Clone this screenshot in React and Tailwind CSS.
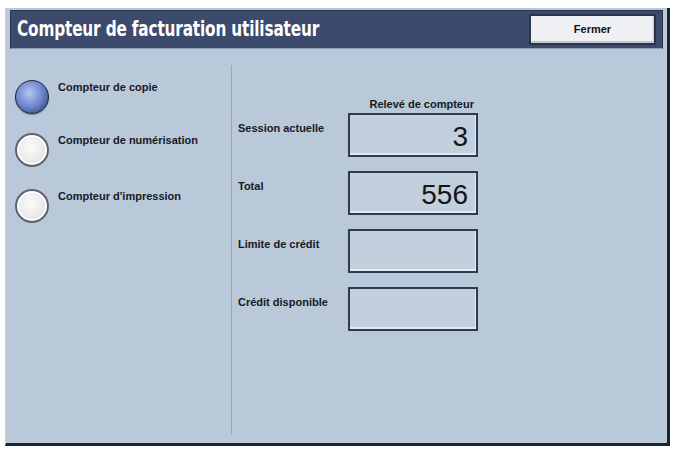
import React from 'react';

const counters = [
    { label: 'Compteur de copie', selected: true, mt: 'mt-[17px]' },
    { label: 'Compteur de numérisation', selected: false, mt: 'mt-[19px]' },
    { label: "Compteur d'impression", selected: false, mt: 'mt-[22px]' },
];

const readings = [
    { label: 'Session actuelle', value: '3' },
    { label: 'Total', value: '556' },
    { label: 'Limite de crédit', value: '' },
    { label: 'Crédit disponible', value: '' },
];

const Radio = ({ selected }) =>
    selected ? (
        <div className="h-[34px] w-[34px] shrink-0 rounded-full border border-[#1c2440] bg-radial-[at_42%_38%] from-[#b4c6f4] via-[#6d85cc] to-[#26335e] shadow-[0_1px_1px_rgba(0,0,0,0.35)]" />
    ) : (
        <div className="h-[34px] w-[34px] shrink-0 rounded-full border-2 border-[#5e636e] bg-radial-[at_45%_40%] from-[#fbfbfb] via-[#ececec] to-[#cfd1d6] shadow-[inset_0_0_0_2px_#ffffff]" />
    );

const App = () => {
    return (
        <div className="h-[449px] w-[673px] bg-white pl-[5px] pt-[8px] font-['Liberation_Sans',Arial,sans-serif] text-[#161a24]">
            <div className="flex h-[438px] w-[665px] flex-col border-l border-r-[3px] border-b-[3px] border-l-[#c9ced8] border-r-[#1b2336] border-b-[#1b2336] bg-[#b9c9d9] px-[4px] pt-[2px]">
                {/* Title bar */}
                <div className="flex h-[39px] items-center justify-between border border-[#283450] border-b-[#8e9cb4] bg-[#3c4a6c] pl-[6px] pr-[6px]">
                    <h1 className="origin-left scale-x-[0.81] whitespace-nowrap font-['DejaVu_Sans_Condensed','DejaVu_Sans',sans-serif] text-[21px] font-bold leading-none tracking-[-0.2px] text-white">
                        Compteur de facturation utilisateur
                    </h1>
                    <button className="flex h-[31px] w-[127px] items-center justify-center border-2 border-[#2a3349] bg-[#eef0f4] text-[11px] font-bold text-[#111] shadow-[inset_-1px_-2px_0_#c4cad6]">
                        Fermer
                    </button>
                </div>

                <div className="flex flex-1">
                    {/* Counter selection */}
                    <div className="w-[221px] pl-[5px] pt-[14px]">
                        {counters.map((c) => (
                            <div key={c.label} className={`flex items-start gap-[9px] ${c.mt}`}>
                                <Radio selected={c.selected} />
                                <span className="pt-[1px] text-[11px] font-bold leading-[13px]">{c.label}</span>
                            </div>
                        ))}
                    </div>

                    {/* Divider */}
                    <div className="mb-[8px] mt-[16px] w-px bg-[#97a7bb]" />

                    {/* Readings */}
                    <div className="pl-[6px] pt-[49px]">
                        <div className="flex w-[240px] justify-end pr-[4px] text-[11px] font-bold leading-[13px]">
                            Relevé de compteur
                        </div>
                        <div className="mt-[2px] flex flex-col gap-[14px]">
                            {readings.map((r) => (
                                <div key={r.label} className="flex items-start">
                                    <span className="w-[110px] pt-[9px] text-[11px] font-bold leading-[13px]">{r.label}</span>
                                    <div className="flex h-[44px] w-[130px] items-center justify-end border-2 border-[#2f394f] bg-[#c2cfdc] pr-[8px] pt-[4px] text-[28px] leading-none text-[#151515] shadow-[inset_-1px_-2px_0_#e3e9f1]">
                                        {r.value}
                                    </div>
                                </div>
                            ))}
                        </div>
                    </div>
                </div>
            </div>
        </div>
    );
};

export default App;
